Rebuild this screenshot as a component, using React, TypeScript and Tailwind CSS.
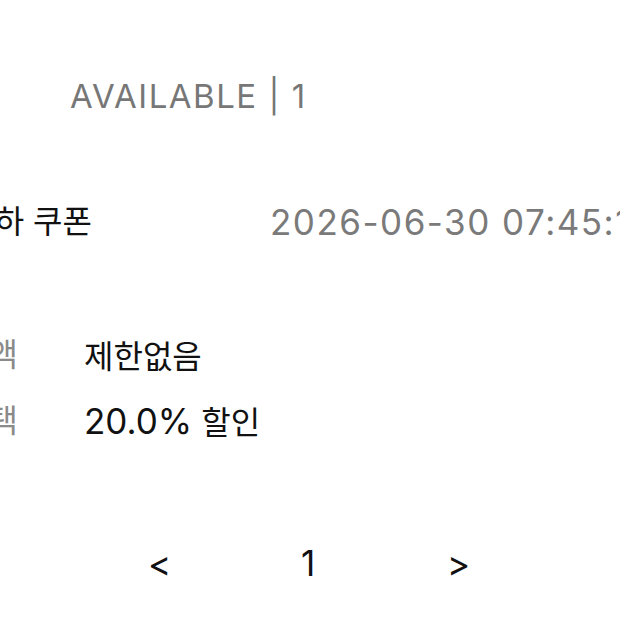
import React from 'react';

const font = { fontFamily: 'Inter, "Noto Sans CJK KR", sans-serif' };

function InfoRow({ label, children }: { label: string; children: React.ReactNode }) {
  return (
    <div className="flex items-center h-[66px] whitespace-nowrap">
      <div className="w-[300px] ml-[-282px] shrink-0 flex justify-end text-[32px] text-[#8a8a8a]">{label}</div>
      <div className="ml-[66px] text-[#111]">{children}</div>
    </div>
  );
}

export default function App() {
  return (
    <div className="w-[620px] h-[620px] overflow-hidden bg-white text-[35px] leading-none" style={font}>
      {/* header */}
      <div className="mt-[76px] h-[40px] flex items-center pl-[70px] text-[33px] text-[#777] tracking-[1.5px] whitespace-nowrap">
        AVAILABLE | 1
      </div>

      {/* coupon */}
      <div className="mt-[86px] h-[40px] flex items-center whitespace-nowrap">
        <div className="w-[300px] ml-[-208px] shrink-0 flex justify-end text-[32px] text-[#111]">생일 축하 쿠폰</div>
        <div className="ml-[178px] text-[#7a7a7a] tracking-[1.5px]">2026-06-30 07:45:10</div>
      </div>

      {/* details */}
      <div className="mt-[80px] flex flex-col">
        <InfoRow label="최소 주문금액">
          <span className="text-[32px]">제한없음</span>
        </InfoRow>
        <InfoRow label="할인 혜택">
          <span>20.0%</span>
          <span className="text-[32px]"> 할인</span>
        </InfoRow>
      </div>

      {/* pagination */}
      <div className="mt-[89px] h-[40px] flex items-center text-[#111]">
        <button className="ml-[148px] w-[20px] text-left">&lt;</button>
        <span className="ml-[130px] w-[20px] text-center">1</span>
        <button className="ml-[129px] w-[20px] text-left">&gt;</button>
      </div>
    </div>
  );
}
